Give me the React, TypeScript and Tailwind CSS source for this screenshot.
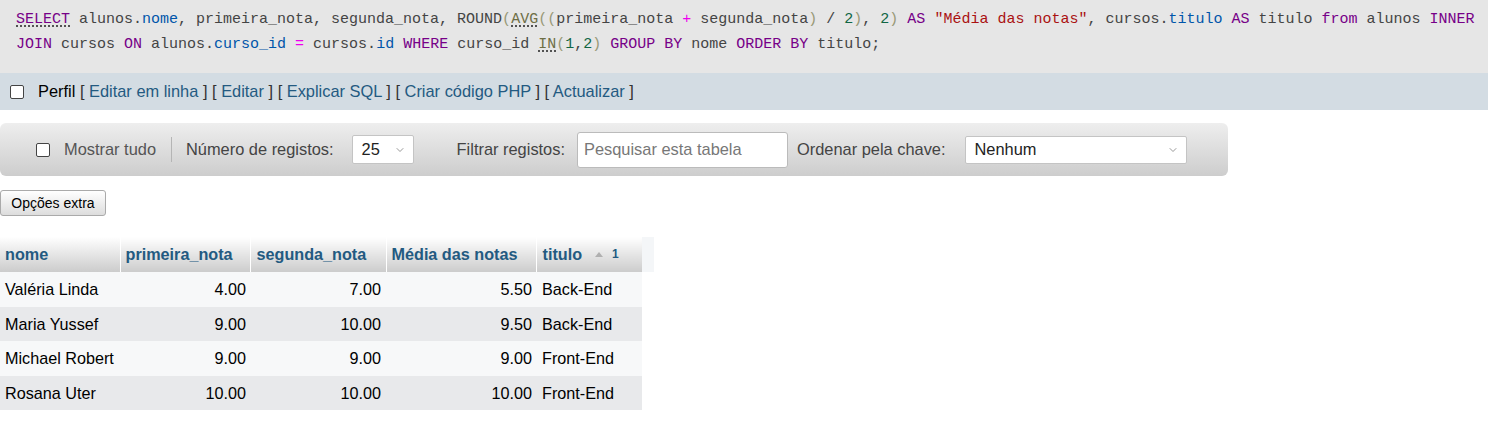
import { ChevronDown } from "lucide-react";

const sans = "font-['Liberation_Sans',Arial,sans-serif]";

type Tok = [string, string];

const KW = "text-[#770088]";
const KWU = "text-[#770088] underline decoration-dotted decoration-[#222] underline-offset-[3px]";
const FN = "text-[#6e6e45] underline decoration-dotted decoration-[#222] underline-offset-[3px]";
const P = "text-[#444]";
const V = "text-[#0055aa]";
const B = "text-[#999977]";
const N = "text-[#116644]";
const S = "text-[#aa1111]";
const OP = "text-[#ee00ee]";

const line1: Tok[] = [
	[KWU, "SELECT"],
	[P, " alunos."],
	[V, "nome"],
	[P, ", primeira_nota, segunda_nota, ROUND"],
	[B, "("],
	[FN, "AVG"],
	[B, "(("],
	[P, "primeira_nota "],
	[OP, "+"],
	[P, " segunda_nota"],
	[B, ")"],
	[P, " / "],
	[N, "2"],
	[B, ")"],
	[P, ", "],
	[N, "2"],
	[B, ")"],
	[P, " "],
	[KW, "AS"],
	[P, " "],
	[S, "\"Média das notas\""],
	[P, ", cursos."],
	[V, "titulo"],
	[P, " "],
	[KW, "AS"],
	[P, " titulo "],
	[KW, "from"],
	[P, " alunos "],
	[KW, "INNER"]
];

const line2: Tok[] = [
	[KW, "JOIN"],
	[P, " cursos "],
	[KW, "ON"],
	[P, " alunos."],
	[V, "curso_id"],
	[P, " "],
	[OP, "="],
	[P, " cursos."],
	[V, "id"],
	[P, " "],
	[KW, "WHERE"],
	[P, " curso_id "],
	[FN, "IN"],
	[B, "("],
	[N, "1"],
	[P, ","],
	[N, "2"],
	[B, ")"],
	[P, " "],
	[KW, "GROUP BY"],
	[P, " nome "],
	[KW, "ORDER BY"],
	[P, " titulo;"]
];

const rows = [
	["Valéria Linda", "4.00", "7.00", "5.50", "Back-End"],
	["Maria Yussef", "9.00", "10.00", "9.50", "Back-End"],
	["Michael Robert", "9.00", "9.00", "9.00", "Front-End"],
	["Rosana Uter", "10.00", "10.00", "10.00", "Front-End"]
];

const links = ["Editar em linha", "Editar", "Explicar SQL", "Criar código PHP", "Actualizar"];

const th = "text-left font-bold text-[#235a81] bg-gradient-to-b from-[#ffffff] to-[#cccccc]";

function Box() {
	return (
		<span className="inline-block w-[14px] h-[14px] bg-white border border-[#444] rounded-[2px] shrink-0" />
	);
}

function SqlLine({ toks }: { toks: Tok[] }) {
	return (
		<div className="whitespace-pre h-[25px] leading-[25px]">
			{toks.map(([c, t], i) => (
				<span key={i} className={c}>
					{t}
				</span>
			))}
		</div>
	);
}

export default function App() {
	return (
		<div className={`w-[1488px] h-[421px] bg-white overflow-hidden ${sans}`}>
			<div className="h-[73px] bg-[#e6e6e6] pl-[16px] pt-[7px] font-['Liberation_Mono',monospace] text-[15px]">
				<SqlLine toks={line1} />
				<SqlLine toks={line2} />
			</div>
			<div className="h-[37px] bg-[#d3dce3] flex items-center pl-[10px] text-[16.4px]">
				<Box />
				<span className="ml-[14px] whitespace-pre">
					<span className="text-black">Perfil </span>
					{links.map((l) => (
						<span key={l}>
							<span className="text-[#333]">[ </span>
							<span className="text-[#235a81]">{l}</span>
							<span className="text-[#333]"> ] </span>
						</span>
					))}
				</span>
			</div>

			<div className="mt-[13px] w-[1228px] h-[53px] rounded-[6px] bg-gradient-to-b from-[#eeeeee] to-[#cdcdcd] flex items-center pl-[36px] text-[16.4px] text-[#444]">
				<Box />
				<span className="ml-[14px] text-[#555]">Mostrar tudo</span>
				<span className="ml-[15px] w-px h-[25px] bg-[#b5b5b5]" />
				<span className="ml-[14px]">Número de registos:</span>
				<div className="ml-[18px] w-[62px] h-[29px] bg-white border border-[#c4c4c4] rounded-[2px] flex items-center justify-between pl-[9px] pr-[7px] text-[#222]">
					<span>25</span>
					<ChevronDown size={12} strokeWidth={1.5} className="text-[#777]" />
				</div>
				<span className="ml-[43px]">Filtrar registos:</span>
				<div className="ml-[12px] w-[211px] h-[36px] bg-white border border-[#bbb] rounded-[3px] flex items-center pl-[6px] text-[#777]">
					Pesquisar esta tabela
				</div>
				<span className="ml-[9px]">Ordenar pela chave:</span>
				<div className="ml-[19px] w-[222px] h-[28px] bg-white border border-[#c4c4c4] rounded-[2px] flex items-center justify-between pl-[9px] pr-[7px] text-[#222]">
					<span>Nenhum</span>
					<ChevronDown size={12} strokeWidth={1.5} className="text-[#777]" />
				</div>
			</div>

			<div className="mt-[14px] w-[106px] h-[26px] rounded-[3px] border border-[#aaa] bg-gradient-to-b from-[#ffffff] to-[#dddddd] flex items-center justify-center text-[14px] text-black">
				Opções extra
			</div>

			<table className="mt-[21px] border-collapse text-[16.2px] text-black">
				<thead>
					<tr className="h-[35px]">
						<th className={`w-[120px] pl-[5px] ${th}`}>nome</th>
						<th className={`w-[130px] pl-[5px] border-l border-white ${th}`}>primeira_nota</th>
						<th className={`w-[136px] pl-[6px] border-l border-white ${th}`}>segunda_nota</th>
						<th className={`w-[150px] pl-[5px] border-l border-white ${th}`}>Média das notas</th>
						<th className={`w-[106px] pl-[6px] border-l border-white ${th}`}>
							<span className="flex items-center">
								titulo
								<svg width="10" height="6" viewBox="0 0 10 6" className="ml-[12px]">
									<path d="M1 6 L5 1 L9 6 Z" fill="#b0b0b0" />
								</svg>
								<span className="ml-[8px] text-[12px]">1</span>
							</span>
						</th>
						<th className="w-[12px] bg-[#f4f6f8]" />
					</tr>
				</thead>
				<tbody>
					{rows.map((r, i) => (
						<tr key={i} className={`h-[34.5px] ${i % 2 === 0 ? "bg-[#f7f8f9]" : "bg-[#e8e9eb]"}`}>
							<td className="pl-[5px]">{r[0]}</td>
							<td className="text-right pr-[4px]">{r[1]}</td>
							<td className="text-right pr-[5px]">{r[2]}</td>
							<td className="text-right pr-[4px]">{r[3]}</td>
							<td className="pl-[6px]">{r[4]}</td>
							<td className="bg-white" />
						</tr>
					))}
				</tbody>
			</table>
		</div>
	);
}
